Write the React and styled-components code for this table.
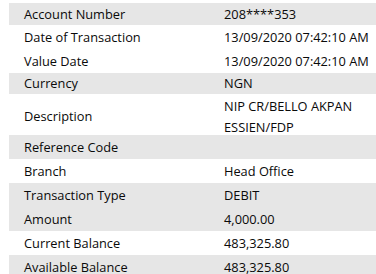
import React from "react";
import styled, { createGlobalStyle } from "styled-components";

const Global = createGlobalStyle`
  html, body { margin: 0; padding: 0; background: #ffffff; overflow: hidden; }
  body { font-family: "Open Sans", "Noto Sans", sans-serif; }
`;

const Page = styled.div`
  padding: 3px 0 0 9px;
  width: 367px;
  overflow: hidden;
`;

const Table = styled.div`
  display: grid;
  grid-template-columns: 200px 1fr;
`;

const Row = styled.div`
  display: contents;
`;

const Cell = styled.div`
  background: ${(p) => (p.$shade ? "#e6e6e6" : "#ffffff")};
  height: ${(p) => p.$h}px;
  box-sizing: border-box;
  padding: ${(p) => p.$pt || 0}px 0 0 15px;
  display: flex;
  flex-direction: column;
  justify-content: center;
  font-size: 12.8px;
  line-height: 21px;
  color: #0a0a0a;
  white-space: nowrap;
  overflow: hidden;
`;

const rows = [
  ["Account Number", ["208****353"], true, 22, 0],
  ["Date of Transaction", ["13/09/2020 07:42:10 AM"], false, 24, 0],
  ["Value Date", ["13/09/2020 07:42:10 AM"], false, 24, 0],
  ["Currency", ["NGN"], true, 21, 0],
  ["Description", ["NIP CR/BELLO AKPAN", "ESSIEN/FDP"], false, 41, 4],
  ["Reference Code", [""], true, 24, 0],
  ["Branch", ["Head Office"], false, 24, 0],
  ["Transaction Type", ["DEBIT"], true, 24, 0],
  ["Amount", ["4,000.00"], true, 24, 0],
  ["Current Balance", ["483,325.80"], false, 24, 0],
  ["Available Balance", ["483,325.80"], true, 24, 0],
];

export default function App() {
  return (
    <>
      <Global />
      <Page>
        <Table>
          {rows.map(([label, value, shade, h, pt]) => (
            <Row key={label}>
              <Cell $shade={shade} $h={h} $pt={pt ? pt - 1 : 0}>{label}</Cell>
              <Cell $shade={shade} $h={h} $pt={pt}>
                {value.map((v, i) => (
                  <span key={i}>{v}</span>
                ))}
              </Cell>
            </Row>
          ))}
        </Table>
      </Page>
    </>
  );
}
